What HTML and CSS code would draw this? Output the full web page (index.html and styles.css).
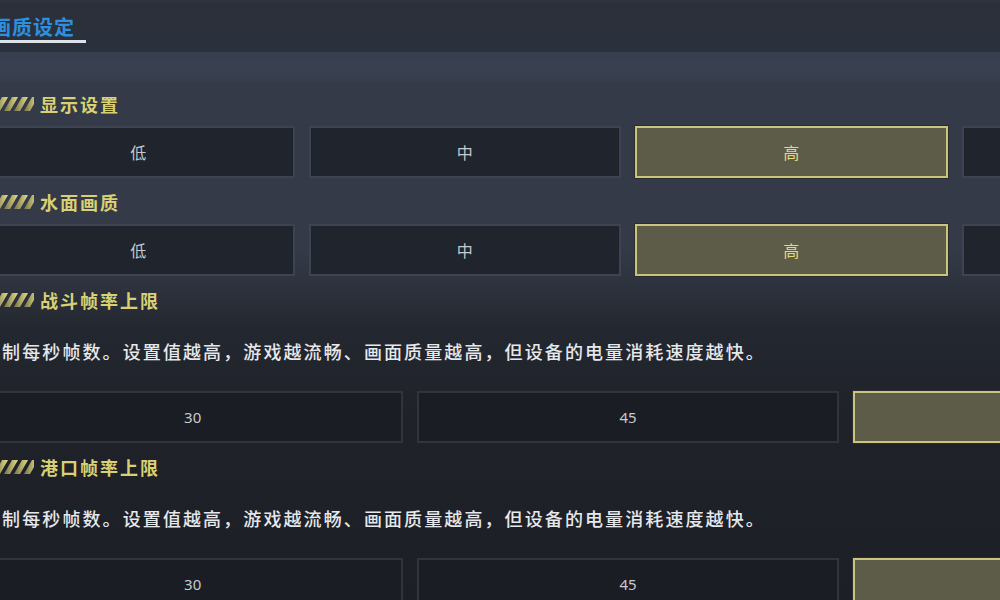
FILE: index.html
```html
<!DOCTYPE html>
<html lang="zh-CN">
<head>
<meta charset="utf-8">
<title>画质设定</title>
<link rel="stylesheet" href="styles.css">
</head>
<body>
<div class="page">
  <header class="topbar">
    <div class="topbar-inner">
      <span class="title">画质设定</span>
    </div>
  </header>
  <div class="band"></div>
  <main class="content">
    <section class="group">
      <h2 class="group-title">
        <svg class="stripes" viewBox="0 0 40 14" width="40" height="14" aria-hidden="true">
          <defs>
            <linearGradient id="sg1" x1="0" y1="0" x2="1" y2="0">
              <stop offset="0" stop-color="#77744a"/>
              <stop offset="1" stop-color="#e4dc86"/>
            </linearGradient>
          </defs>
          <g fill="url(#sg1)">
            <polygon points="-10,14 -4,14 4,0 -2,0"/>
            <polygon points="0,14 6,14 14,0 8,0"/>
            <polygon points="10,14 16,14 24,0 18,0"/>
            <polygon points="20,14 26,14 34,0 28,0"/>
            <polygon points="30,14 36,14 44,0 38,0"/>
          </g>
        </svg>
        <span>显示设置</span>
      </h2>
      <div class="options four">
        <div class="opt">低</div>
        <div class="opt">中</div>
        <div class="opt selected">高</div>
        <div class="opt">极高</div>
      </div>
    </section>

    <section class="group">
      <h2 class="group-title">
        <svg class="stripes" viewBox="0 0 40 14" width="40" height="14" aria-hidden="true">
          <g fill="url(#sg1)">
            <polygon points="-10,14 -4,14 4,0 -2,0"/>
            <polygon points="0,14 6,14 14,0 8,0"/>
            <polygon points="10,14 16,14 24,0 18,0"/>
            <polygon points="20,14 26,14 34,0 28,0"/>
            <polygon points="30,14 36,14 44,0 38,0"/>
          </g>
        </svg>
        <span>水面画质</span>
      </h2>
      <div class="options four">
        <div class="opt">低</div>
        <div class="opt">中</div>
        <div class="opt selected">高</div>
        <div class="opt">极高</div>
      </div>
    </section>

    <section class="group">
      <h2 class="group-title">
        <svg class="stripes" viewBox="0 0 40 14" width="40" height="14" aria-hidden="true">
          <g fill="url(#sg1)">
            <polygon points="-10,14 -4,14 4,0 -2,0"/>
            <polygon points="0,14 6,14 14,0 8,0"/>
            <polygon points="10,14 16,14 24,0 18,0"/>
            <polygon points="20,14 26,14 34,0 28,0"/>
            <polygon points="30,14 36,14 44,0 38,0"/>
          </g>
        </svg>
        <span>战斗帧率上限</span>
      </h2>
      <p class="desc">限制每秒帧数。设置值越高，游戏越流畅、画面质量越高，但设备的电量消耗速度越快。</p>
      <div class="options three dark">
        <div class="opt">30</div>
        <div class="opt">45</div>
        <div class="opt selected">60</div>
      </div>
    </section>

    <section class="group">
      <h2 class="group-title">
        <svg class="stripes" viewBox="0 0 40 14" width="40" height="14" aria-hidden="true">
          <g fill="url(#sg1)">
            <polygon points="-10,14 -4,14 4,0 -2,0"/>
            <polygon points="0,14 6,14 14,0 8,0"/>
            <polygon points="10,14 16,14 24,0 18,0"/>
            <polygon points="20,14 26,14 34,0 28,0"/>
            <polygon points="30,14 36,14 44,0 38,0"/>
          </g>
        </svg>
        <span>港口帧率上限</span>
      </h2>
      <p class="desc">限制每秒帧数。设置值越高，游戏越流畅、画面质量越高，但设备的电量消耗速度越快。</p>
      <div class="options three dark">
        <div class="opt">30</div>
        <div class="opt">45</div>
        <div class="opt selected">60</div>
      </div>
    </section>
  </main>
</div>
</body>
</html>
```

FILE: styles.css
```css
* {
  box-sizing: border-box;
}

html, body {
  margin: 0;
  padding: 0;
  width: 1000px;
  height: 600px;
  overflow: hidden;
}

body {
  font-family: "Noto Sans CJK SC", "Noto Sans", sans-serif;
  background: linear-gradient(to bottom,
    #343a47 0px,
    #343a48 250px,
    #2c313c 290px,
    #23272f 330px,
    #1f2229 420px,
    #1c1f26 600px);
  color: #e4e6ea;
}

.page {
  width: 1000px;
  height: 600px;
  overflow: hidden;
}

.topbar {
  height: 52px;
  background: linear-gradient(to bottom, #2f3541 0px, #2a2f3a 4px, #2b313c 52px);
}

.topbar-inner {
  margin-left: -18px;
  display: flex;
}

.title {
  display: inline-block;
  margin-top: 14px;
  padding: 0 11px 0 9px;
  font-size: 20px;
  line-height: 26px;
  font-weight: 700;
  letter-spacing: 1px;
  color: #2d8fdf;
  border-bottom: 3px solid #dde1e8;
}

.band {
  height: 30px;
  background: linear-gradient(to bottom, #373e4d 0%, #3a4150 60%, #363c4a 100%);
}

.content {
  margin-left: -18px;
  width: 1292px;
  padding-top: 11px;
  display: flex;
  flex-direction: column;
  gap: 13px;
}

.group {
  display: flex;
  flex-direction: column;
}

.group-title {
  margin: 0 0 11px 0;
  height: 22px;
  display: flex;
  align-items: center;
  gap: 6px;
  padding-left: 12px;
  font-size: 18px;
  font-weight: 700;
  letter-spacing: 2px;
  color: #d8d174;
  line-height: 22px;
}

.stripes {
  flex: none;
  display: block;
}

.desc {
  margin: 0;
  padding: 15px 0 26px 0;
  font-size: 18px;
  font-weight: 500;
  line-height: 28px;
  letter-spacing: 2.1px;
  color: #e6e8ec;
  white-space: nowrap;
}

.options {
  display: grid;
  gap: 14px;
}

.options.four {
  grid-template-columns: repeat(4, 1fr);
}

.options.three {
  grid-template-columns: repeat(3, 1fr);
}

.opt {
  height: 52px;
  display: flex;
  align-items: center;
  justify-content: center;
  background: #20242d;
  border: 2px solid #3d4350;
  font-size: 16px;
  color: #c6cad0;
}

.options.dark .opt {
  background: #1a1d24;
  border-color: #30343d;
  font-family: "Noto Sans", sans-serif;
  font-size: 15px;
}

.opt.selected,
.options.dark .opt.selected {
  background: #5d5c49;
  border-color: #c9c57e;
  color: #e2da78;
  box-shadow: 0 0 0 1px #2a2d30;
}
```
